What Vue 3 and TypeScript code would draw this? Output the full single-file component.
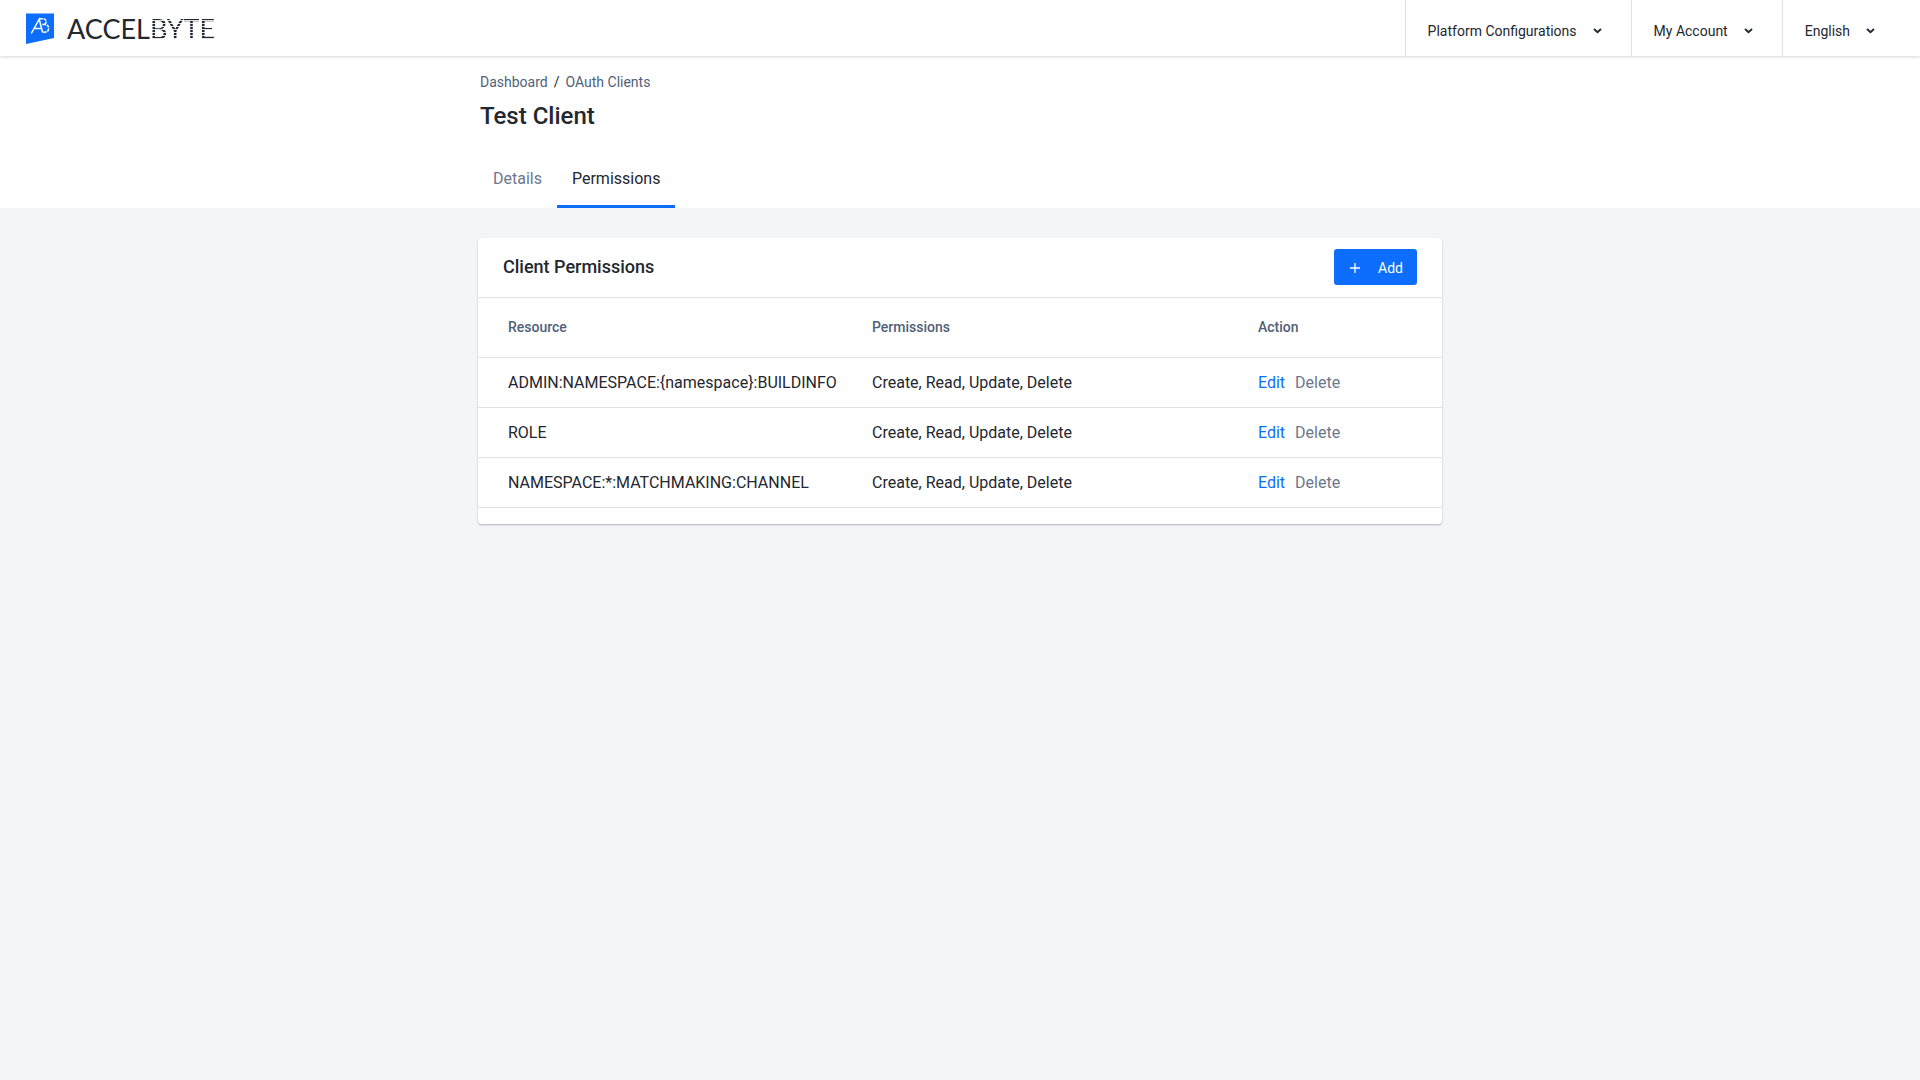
<script setup lang="ts">
interface PermissionRow {
  resource: string
  permissions: string[]
}

const menus: string[] = ['Platform Configurations', 'My Account', 'English']

const all = ['Create', 'Read', 'Update', 'Delete']
const rows: PermissionRow[] = [
  { resource: 'ADMIN:NAMESPACE:{namespace}:BUILDINFO', permissions: all },
  { resource: 'ROLE', permissions: all },
  { resource: 'NAMESPACE:*:MATCHMAKING:CHANNEL', permissions: all },
]
</script>

<template>
  <div class="page">
    <header class="topbar">
      <a class="brand" href="#" aria-label="AccelByte">
        <svg class="mark" viewBox="0 0 28 31" width="28" height="31" aria-hidden="true">
          <path d="M0 0.5H28V25L0 31Z" fill="#0d6efd" />
          <g fill="none" stroke="#fff" stroke-width="1.5">
            <path d="M5.3 20.5L13.2 6.2L16.6 19.5M8.5 15.6H15.4" />
            <path d="M13.4 5.7H17.6Q20.2 6.2 20.2 8.8Q20 11.2 17.2 11.5M16.4 11.6H19Q22.7 12 22.7 15.3Q22.4 18.9 18.8 19.2H16.6" stroke-dasharray="3.4 0.8" />
          </g>
        </svg>
        <span class="wordmark">ACCEL<span class="striped">BYTE</span></span>
      </a>
      <nav class="menus">
        <button v-for="menu in menus" :key="menu" class="menu" type="button">
          <span>{{ menu }}</span>
          <svg class="chevron" viewBox="0 0 9 6" width="9" height="6" aria-hidden="true">
            <path d="M1 1L4.5 4.3L8 1" fill="none" stroke="#23272f" stroke-width="1.9" />
          </svg>
        </button>
      </nav>
    </header>

    <div class="page-head">
      <div class="container">
        <nav class="breadcrumb" aria-label="Breadcrumb">
          <a href="#">Dashboard</a><span class="sep">/</span><a href="#">OAuth Clients</a>
        </nav>
        <h1>Test Client</h1>
        <nav class="tabs">
          <a class="tab" href="#">Details</a>
          <a class="tab active" href="#" aria-current="page">Permissions</a>
        </nav>
      </div>
    </div>

    <main class="container">
      <section class="card">
        <div class="card-head">
          <h2>Client Permissions</h2>
          <button class="add" type="button">
            <svg viewBox="0 0 10 10" width="10" height="10" aria-hidden="true">
              <path d="M5 0V10M0 5H10" fill="none" stroke="#fff" stroke-width="1.3" />
            </svg>
            <span>Add</span>
          </button>
        </div>
        <table>
          <thead>
            <tr>
              <th class="col-resource" scope="col">Resource</th>
              <th class="col-permissions" scope="col">Permissions</th>
              <th scope="col">Action</th>
            </tr>
          </thead>
          <tbody>
            <tr v-for="row in rows" :key="row.resource">
              <td>{{ row.resource }}</td>
              <td>{{ row.permissions.join(', ') }}</td>
              <td>
                <div class="actions">
                  <a class="edit" href="#">Edit</a>
                  <a class="delete" href="#">Delete</a>
                </div>
              </td>
            </tr>
          </tbody>
        </table>
      </section>
    </main>
  </div>
</template>

<style>
body {
  margin: 0;
  background: #f4f5f7;
}
</style>

<style scoped>
.page {
  min-height: 100vh;
  font-family: Roboto, "Liberation Sans", sans-serif;
  font-size: 16px;
  line-height: 24px;
  color: #23272f;
  background: #f4f5f7;
}

a {
  text-decoration: none;
}

button {
  font: inherit;
  cursor: pointer;
}

.topbar {
  position: relative;
  display: flex;
  justify-content: space-between;
  height: 56px;
  background: #fff;
  box-shadow: 0 1px 3px rgba(0, 0, 0, 0.16);
}

.brand {
  display: flex;
  align-items: center;
  gap: 13px;
  padding-left: 26px;
  color: #23272f;
}

.wordmark {
  padding-top: 1px;
  font-family: Lato, "Liberation Sans", sans-serif;
  font-size: 27px;
  line-height: 32px;
}

.striped {
  color: transparent;
  background: repeating-linear-gradient(#23272f 0 2px, #dfe1e6 2px 3px);
  background-clip: text;
}

.menus {
  display: flex;
  padding-right: 16px;
}

.menu {
  display: flex;
  align-items: center;
  gap: 16px;
  padding: 6px 29px 0 22px;
  border: 0;
  border-left: 1px solid #dfe1e6;
  background: none;
  color: #23272f;
  font-size: 14px;
}

.page-head {
  background: #fff;
}

.container {
  max-width: 964px;
  margin: 0 auto;
}

.breadcrumb {
  padding: 14px 2px 0;
  font-size: 14px;
}

.breadcrumb a {
  color: #505f79;
}

.sep {
  margin: 0 6px;
}

h1 {
  margin: 6px 2px 0;
  font-size: 24px;
  line-height: 32px;
  font-weight: 500;
}

.tabs {
  display: flex;
  margin-top: 16px;
}

.tab {
  padding: 19px 15px 14px;
  border-bottom: 3px solid transparent;
  color: #6b778c;
}

.tab.active {
  border-color: #0d6efd;
  color: #23272f;
}

.card {
  margin-top: 30px;
  padding-bottom: 16px;
  border-radius: 4px;
  background: #fff;
  box-shadow: 0 1px 2px rgba(0, 0, 0, 0.28);
}

.card-head {
  display: flex;
  align-items: center;
  justify-content: space-between;
  padding: 11px 25px 12px;
  border-bottom: 1px solid #dfe1e6;
}

h2 {
  margin: 0;
  font-size: 18px;
  line-height: 24px;
  font-weight: 500;
}

.add {
  display: flex;
  align-items: center;
  gap: 18px;
  height: 36px;
  padding: 2px 14px 0 16px;
  border: 0;
  border-radius: 3px;
  background: #0d6efd;
  color: #fff;
  font-size: 14px;
}

table {
  width: 100%;
  table-layout: fixed;
  border-collapse: separate;
  border-spacing: 0;
}

th,
td {
  padding: 13px 0 12px 30px;
  border-bottom: 1px solid #dfe1e6;
  text-align: left;
}

th {
  padding: 17px 0 18px 30px;
  font-size: 14px;
  font-weight: 500;
  color: #505f79;
}

.col-resource {
  width: 334px;
}

.col-permissions {
  width: 356px;
}

.actions {
  display: flex;
  gap: 10px;
}

.edit {
  color: #0d6efd;
}

.delete {
  color: #6b778c;
}
</style>
